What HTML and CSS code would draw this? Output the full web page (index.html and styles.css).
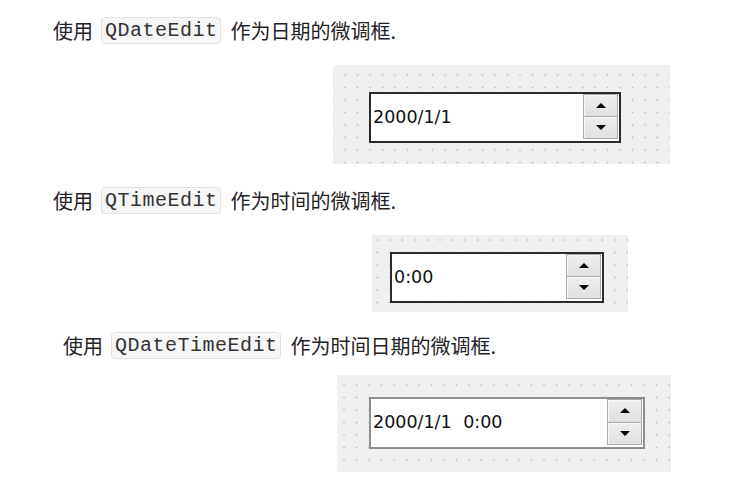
FILE: index.html
```html
<!DOCTYPE html>
<html lang="zh">
<head>
<meta charset="utf-8">
<title>Spin boxes</title>
<link rel="stylesheet" href="styles.css">
</head>
<body>
<main class="doc">
  <p class="line l1">使用<code class="chip">QDateEdit</code>作为日期的微调框.</p>
  <div class="canvas c1">
    <div class="spin focus w1">
      <div class="spin-text">2000/1/1</div>
      <div class="spin-btns">
        <div class="spin-btn"><span class="tri up"></span></div>
        <div class="spin-btn"><span class="tri down"></span></div>
      </div>
    </div>
  </div>

  <p class="line l2">使用<code class="chip">QTimeEdit</code>作为时间的微调框.</p>
  <div class="canvas c2">
    <div class="spin focus w2">
      <div class="spin-text">0:00</div>
      <div class="spin-btns">
        <div class="spin-btn"><span class="tri up"></span></div>
        <div class="spin-btn"><span class="tri down"></span></div>
      </div>
    </div>
  </div>

  <p class="line l3">使用<code class="chip">QDateTimeEdit</code>作为时间日期的微调框.</p>
  <div class="canvas c3">
    <div class="spin idle w3">
      <div class="spin-text wide">2000/1/1 0:00</div>
      <div class="spin-btns">
        <div class="spin-btn"><span class="tri up"></span></div>
        <div class="spin-btn"><span class="tri down"></span></div>
      </div>
    </div>
  </div>
</main>
</body>
</html>
```
FILE: styles.css
```css
html, body {
  margin: 0;
  padding: 0;
  background: #ffffff;
}

.doc {
  padding-top: 17px;
  font-family: "Noto Sans CJK SC", "Noto Sans", sans-serif;
  color: #1f2328;
}

.line {
  margin: 0;
  height: 27px;
  line-height: 27px;
  font-size: 20px;
  display: flex;
  align-items: center;
  white-space: nowrap;
}

.l1 { padding-left: 53px; margin-bottom: 21px; }
.l2 { padding-left: 53px; margin-bottom: 21px; }
.l3 { padding-left: 63px; margin-bottom: 16px; }

.chip {
  box-sizing: border-box;
  height: 27px;
  display: inline-flex;
  align-items: center;
  margin: 0 10px 0 8px;
  padding: 0 2px 0 3px;
  font-family: "Liberation Mono", "DejaVu Sans Mono", monospace;
  font-size: 20px;
  letter-spacing: 0.5px;
  color: #333;
  background: #f6f6f7;
  border: 1px solid #e1e1e4;
  border-radius: 4px;
}

.canvas {
  box-sizing: border-box;
  background-color: #f0f0f0;
  background-image: radial-gradient(circle, #c4c4c4 0.8px, transparent 1.2px);
  background-size: 12.5px 12.5px;
}

.c1 {
  width: 337px;
  height: 99px;
  margin: 0 0 23px 333px;
  padding: 27px 0 0 36px;
  background-position: 5.75px 3.75px;
}

.c2 {
  width: 256px;
  height: 77px;
  margin: 0 0 20px 372px;
  padding: 17px 0 0 18px;
  background-position: -0.75px -1.25px;
}

.c3 {
  width: 334px;
  height: 97px;
  margin: 0 0 0 337px;
  padding: 22px 0 0 32px;
  background-position: 0.75px 3.75px;
}

.spin {
  box-sizing: border-box;
  display: flex;
  align-items: stretch;
  background: #ffffff;
  padding: 0 1px 2px 0;
}

.focus { border: 2px solid #2b2b2b; }
.idle { border: 2px solid #8e8e8e; }

.w1 { width: 252px; height: 51px; }
.w2 { width: 214px; height: 51px; }
.w3 { width: 276px; height: 52px; }

.spin-text {
  flex: 1;
  display: flex;
  align-items: center;
  padding-left: 2px;
  font-family: "DejaVu Sans", sans-serif;
  font-size: 17.5px;
  color: #111;
  white-space: pre;
}

.wide { word-spacing: 6px; }

.spin-btns {
  width: 35px;
  box-sizing: border-box;
  display: flex;
  flex-direction: column;
  border: 1px solid #ababab;
}

.spin-btn {
  flex: 1;
  display: flex;
  align-items: center;
  justify-content: center;
  background: linear-gradient(#efefef, #e0e0e0);
  box-shadow: inset 1px 1px 0 #f8f8f8;
}

.spin-btn + .spin-btn { border-top: 1px solid #ababab; }

.tri {
  width: 0;
  height: 0;
  border-left: 5px solid transparent;
  border-right: 5px solid transparent;
}

.up { border-bottom: 5px solid #000; }
.down { border-top: 5px solid #000; }
```
